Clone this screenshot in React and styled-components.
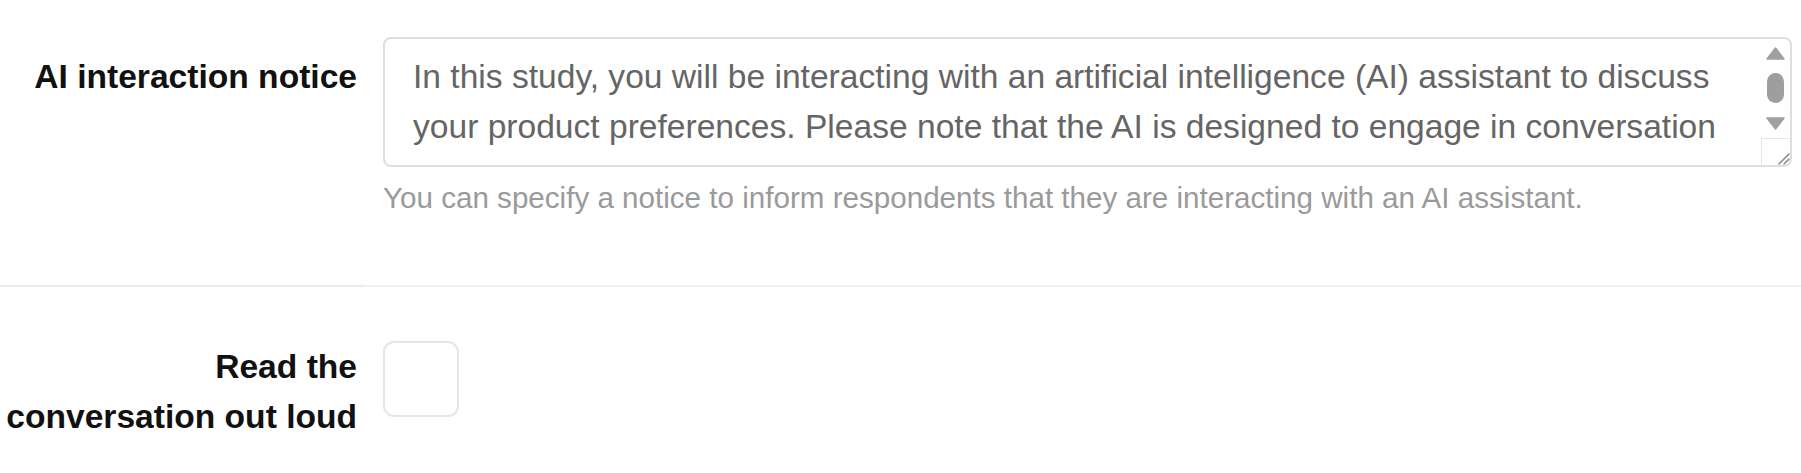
import React from "react";
import styled, { createGlobalStyle } from "styled-components";

const Global = createGlobalStyle`
  html, body { margin: 0; padding: 0; background: #ffffff; }
  body { font-family: "Liberation Sans", Arial, Helvetica, sans-serif; }
  * { box-sizing: border-box; }
`;

const Page = styled.div`
  width: 1801px;
  height: 473px;
  overflow: hidden;
  background: #ffffff;
`;

const Row = styled.div`
  display: grid;
  grid-template-columns: 365px 1fr;
`;

const LabelCell = styled.div`
  padding: ${(p) => p.$top}px 8px ${(p) => p.$bottom}px 0;
  text-align: right;
  font-weight: 700;
  font-size: 33.6px;
  line-height: 50.4px;
  color: #111111;
  border-bottom: ${(p) => (p.$divider ? "2px solid #ebebeb" : "none")};
`;

const FieldCell = styled.div`
  padding: ${(p) => p.$top}px 9px ${(p) => p.$bottom}px 18px;
  border-bottom: ${(p) => (p.$divider ? "2px solid #f2f2f2" : "none")};
  display: flex;
  flex-direction: column;
  align-items: flex-start;
`;

const Frame = styled.div`
  width: 100%;
  height: 130px;
  border: 2px solid #dedede;
  border-radius: 8px;
  display: flex;
  overflow: hidden;
  background: #ffffff;
`;

const TextArea = styled.textarea`
  flex: 1;
  height: 100%;
  border: none;
  outline: none;
  resize: none;
  overflow: hidden;
  padding: 13px 24px 0 28px;
  margin: 0;
  font-family: "Liberation Sans", Arial, Helvetica, sans-serif;
  font-size: 33.6px;
  line-height: 50.4px;
  color: #656565;
  background: transparent;
`;

const ScrollBar = styled.div`
  width: 29px;
  flex: none;
  display: flex;
  flex-direction: column;
  align-items: center;
  padding-top: 8px;
`;

const Arrow = styled.svg`
  display: block;
  flex: none;
`;

const Thumb = styled.div`
  width: 17px;
  height: 30px;
  margin: 13px 0 14px;
  border-radius: 9px;
  background: #9e9e9e;
  flex: none;
`;

const Resizer = styled.div`
  margin-top: auto;
  width: 29px;
  height: 27px;
  border-top: 1px solid #e6e6e6;
  border-left: 1px solid #e6e6e6;
  display: flex;
  align-items: flex-end;
  justify-content: flex-end;
`;

const Help = styled.div`
  margin-top: 14px;
  font-size: 29.6px;
  line-height: 34px;
  color: #9a9a9a;
  white-space: nowrap;
`;

const Check = styled.div`
  width: 76px;
  height: 76px;
  border: 2px solid #e6e6e6;
  border-radius: 11px;
  background: #ffffff;
`;

const NOTICE =
  "In this study, you will be interacting with an artificial intelligence (AI) assistant to discuss your product preferences. Please note that the AI is designed to engage in conversation and gather your insights, but it is not a human being. Your responses will be used for research purposes only.";

export default function App() {
  return (
    <Page>
      <Global />
      <Row>
        <LabelCell $top={52} $bottom={0} $divider>
          AI interaction notice
        </LabelCell>
        <FieldCell $top={37} $bottom={70} $divider>
          <Frame>
            <TextArea defaultValue={NOTICE} />
            <ScrollBar>
              <Arrow width="19" height="13" viewBox="0 0 19 13">
                <path d="M9.5 1 L18 12 L1 12 Z" fill="#a0a0a0" strokeLinejoin="round" stroke="#a0a0a0" strokeWidth="1.5" />
              </Arrow>
              <Thumb />
              <Arrow width="19" height="13" viewBox="0 0 19 13">
                <path d="M1 1 L18 1 L9.5 12 Z" fill="#a0a0a0" strokeLinejoin="round" stroke="#a0a0a0" strokeWidth="1.5" />
              </Arrow>
              <Resizer>
                <svg width="14" height="14" viewBox="0 0 14 14">
                  <path d="M13 3 L3 13 M13 8 L8 13" stroke="#8a8a8a" strokeWidth="1.6" strokeLinecap="round" />
                </svg>
              </Resizer>
            </ScrollBar>
          </Frame>
          <Help>You can specify a notice to inform respondents that they are interacting with an AI assistant.</Help>
        </FieldCell>
      </Row>
      <Row>
        <LabelCell $top={55} $bottom={0}>
          Read the conversation out loud
        </LabelCell>
        <FieldCell $top={54} $bottom={0}>
          <Check role="checkbox" aria-checked="false" aria-label="Read the conversation out loud" />
        </FieldCell>
      </Row>
    </Page>
  );
}
